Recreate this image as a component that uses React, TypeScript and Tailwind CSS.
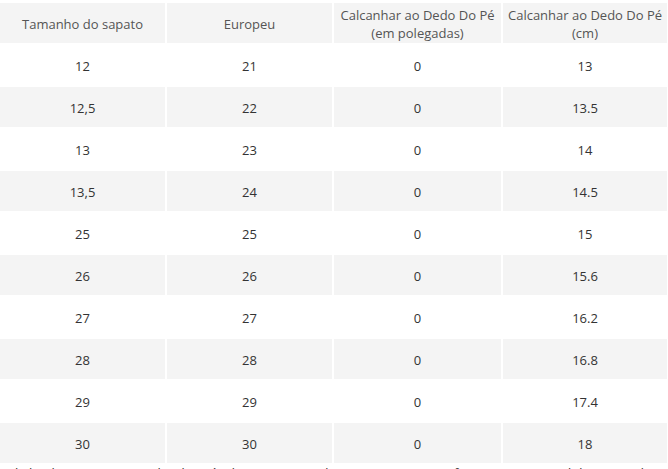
const rows: [string, string, string, string][] = [
  ['12', '21', '0', '13'],
  ['12,5', '22', '0', '13.5'],
  ['13', '23', '0', '14'],
  ['13,5', '24', '0', '14.5'],
  ['25', '25', '0', '15'],
  ['26', '26', '0', '15.6'],
  ['27', '27', '0', '16.2'],
  ['28', '28', '0', '16.8'],
  ['29', '29', '0', '17.4'],
  ['30', '30', '0', '18'],
];

const headers: [string, string?][] = [
  ['Tamanho do sapato'],
  ['Europeu'],
  ['Calcanhar ao Dedo Do Pé', '(em polegadas)'],
  ['Calcanhar ao Dedo Do Pé', '(cm)'],
];

export default function App() {
  return (
    <div className="w-[668px] h-[469px] overflow-hidden bg-white pt-[3px] font-['Open_Sans',sans-serif] text-[13px]">
      <div className="grid w-[665px] grid-cols-[165px_165px_167px_164px] gap-[2px]">
        {headers.map(([a, b], i) => (
          <div
            key={i}
            className="flex h-[40px] flex-col items-center justify-center whitespace-nowrap bg-[#f4f4f4] pt-[2px] text-center leading-[18px] text-[#555]"
          >
            <span>{a}</span>
            {b && <span>{b}</span>}
          </div>
        ))}
        {rows.map((row, i) =>
          row.map((cell, j) => (
            <div
              key={`${i}-${j}`}
              className={`flex h-[40px] items-center justify-center pt-[3px] text-[#333] ${
                i % 2 === 1 ? 'bg-[#f4f4f4]' : 'bg-white'
              }`}
            >
              {cell}
            </div>
          )),
        )}
      </div>
      <p className="leading-[20px] text-[#333]">
        Vale lembrar que o tamanho dos pés das crianças pode variar, por isso confira sempre as medidas antes de fazer a compra.
      </p>
    </div>
  );
}
